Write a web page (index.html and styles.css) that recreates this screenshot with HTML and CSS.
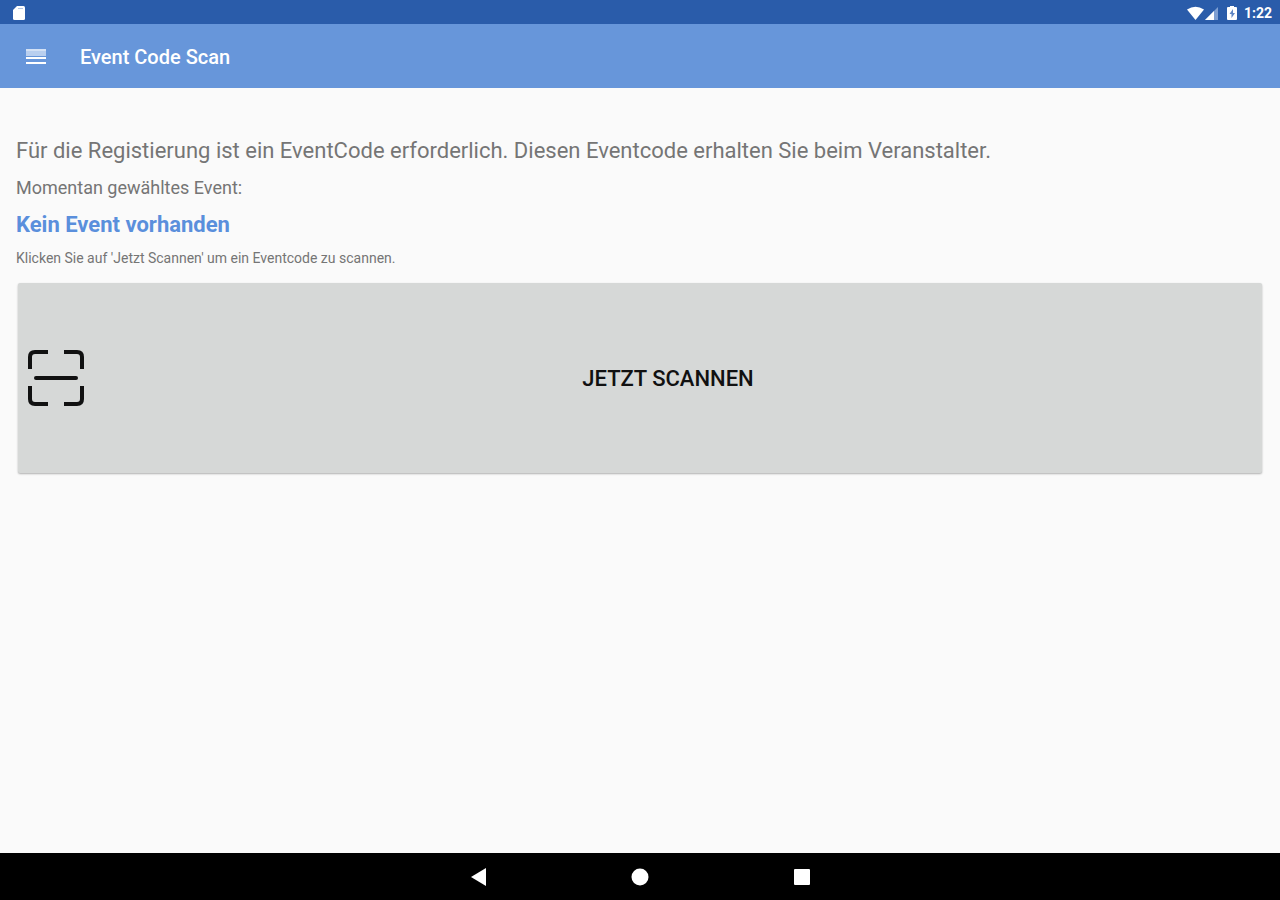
FILE: index.html
```html
<!DOCTYPE html>
<html lang="de">
<head>
    <meta charset="UTF-8">
    <meta name="viewport" content="width=device-width, initial-scale=1.0">
    <title>Event Code Scan</title>
    <link rel="stylesheet" href="styles.css">
</head>
<body>
    <div class="status-bar">
        <svg class="sd-icon" width="14" height="16" viewBox="0 0 14 16" aria-hidden="true">
            <path fill="#fff" d="M5 1h6.500a1.500 1.500 0 0 1 1.500 1.500v11a1.500 1.500 0 0 1-1.500 1.500h-9A1.500 1.500 0 0 1 1 13.500V5z"/>
            <path stroke="#b5c6e4" d="M6 3.500h5"/>
        </svg>
        <div class="status-right">
            <svg width="34" height="16" viewBox="0 0 34 16" aria-hidden="true">
                <path fill="#fff" d="M1 4.500Q9.500-1 18 4.500L9.500 15z"/>
                <path fill="#7f9fd2" d="M32 2v13H19z"/>
                <path fill="#fff" d="M28 6v9h-9z"/>
            </svg>
            <svg width="12" height="16" viewBox="0 0 12 16" aria-hidden="true">
                <path fill="#fff" d="M4 1h4v1h2a1 1 0 0 1 1 1v11a1 1 0 0 1-1 1H2a1 1 0 0 1-1-1V3a1 1 0 0 1 1-1h2z"/>
                <path fill="#5f86c4" d="M7 4 3.500 9h2v4L9 8H7z"/>
            </svg>
            <span class="clock">1:22</span>
        </div>
    </div>

    <header class="app-bar">
        <button type="button" class="menu-btn" aria-label="Menü">
            <svg width="20" height="16" viewBox="0 0 20 16" aria-hidden="true">
                <path fill="#b9cfef" d="M0 0h20v7H0z"/>
                <path fill="#d3e1f5" d="M0 0h20v2H0z"/>
                <path fill="#fff" d="M0 8h20v2H0zM0 13h20v2H0z"/>
            </svg>
        </button>
        <h1>Event Code Scan</h1>
    </header>

    <main class="content">
        <p class="intro">Für die Registierung ist ein EventCode erforderlich. Diesen Eventcode erhalten Sie beim Veranstalter.</p>
        <p class="label">Momentan gewähltes Event:</p>
        <p class="event">Kein Event vorhanden</p>
        <p class="hint">Klicken Sie auf 'Jetzt Scannen' um ein Eventcode zu scannen.</p>

        <div class="actions">
            <button type="button" class="scan-btn">
                <svg width="56" height="56" viewBox="0 0 56 56" fill="none" stroke="#111" stroke-width="4" aria-hidden="true">
                    <path d="M20 2H7Q2 2 2 7v12M36 2h13q5 0 5 5v12M2 36v13q0 5 5 5h13M54 36v13q0 5-5 5H36"/>
                    <path stroke-linecap="round" d="M8 28h40"/>
                </svg>
                <span>JETZT SCANNEN</span>
            </button>
        </div>
    </main>

    <nav class="nav-bar">
        <button type="button" aria-label="Zurück">
            <svg width="18" height="18" viewBox="0 0 18 18"><path fill="#fff" d="M17 0v18L2 9z"/></svg>
        </button>
        <button type="button" aria-label="Startseite">
            <svg width="18" height="18" viewBox="0 0 18 18"><circle fill="#fff" cx="9" cy="9" r="8.500"/></svg>
        </button>
        <button type="button" aria-label="Übersicht">
            <svg width="18" height="18" viewBox="0 0 18 18"><rect fill="#fff" x="1" y="1" width="16" height="16" rx="1"/></svg>
        </button>
    </nav>
</body>
</html>
```

FILE: styles.css
```css
* {
    margin: 0;
    padding: 0;
    box-sizing: border-box;
}

body {
    font-family: Roboto, "Liberation Sans", sans-serif;
    background: #fafafa;
    color: #757575;
    min-height: 100vh;
    display: flex;
    flex-direction: column;
}

button {
    font-family: inherit;
    border: none;
    background: none;
    cursor: pointer;
}

svg {
    display: block;
    flex-shrink: 0;
}

.status-bar {
    display: flex;
    align-items: center;
    justify-content: space-between;
    height: 24px;
    padding: 2px 8px 0 12px;
    background: #2a5caa;
}

.status-right {
    display: flex;
    align-items: center;
    gap: 6px;
}

.clock {
    color: #fff;
    font-size: 14px;
    font-weight: 700;
    line-height: 16px;
}

.app-bar {
    display: flex;
    align-items: center;
    gap: 24px;
    height: 64px;
    padding: 2px 16px 0;
    background: #6796da;
}

.menu-btn {
    padding: 12px 10px;
}

.app-bar h1 {
    color: #fff;
    font-size: 20px;
    font-weight: 500;
    line-height: 24px;
}

.content {
    display: flex;
    flex-direction: column;
    gap: 11px;
    flex: 1;
    padding: 49px 16px;
}

.intro {
    font-size: 22px;
    line-height: 28px;
}

.label {
    font-size: 18px;
    line-height: 24px;
}

.event {
    color: #5a8fdc;
    font-size: 22px;
    font-weight: 700;
    line-height: 28px;
}

.hint {
    font-size: 14px;
    line-height: 16px;
}

.actions {
    padding: 6px 2px;
}

.scan-btn {
    display: flex;
    align-items: center;
    width: 100%;
    min-height: 190px;
    padding: 0 10px;
    background: #d6d8d7;
    border-radius: 2px;
    box-shadow: 0 1px 2px rgba(0, 0, 0, 0.3);
    color: #111;
    font-size: 22px;
    font-weight: 500;
}

.scan-btn span {
    flex: 1;
}

.nav-bar {
    display: flex;
    align-items: center;
    justify-content: center;
    gap: 114px;
    height: 47px;
    background: #000;
}

.nav-bar button {
    padding: 15px;
}
```
